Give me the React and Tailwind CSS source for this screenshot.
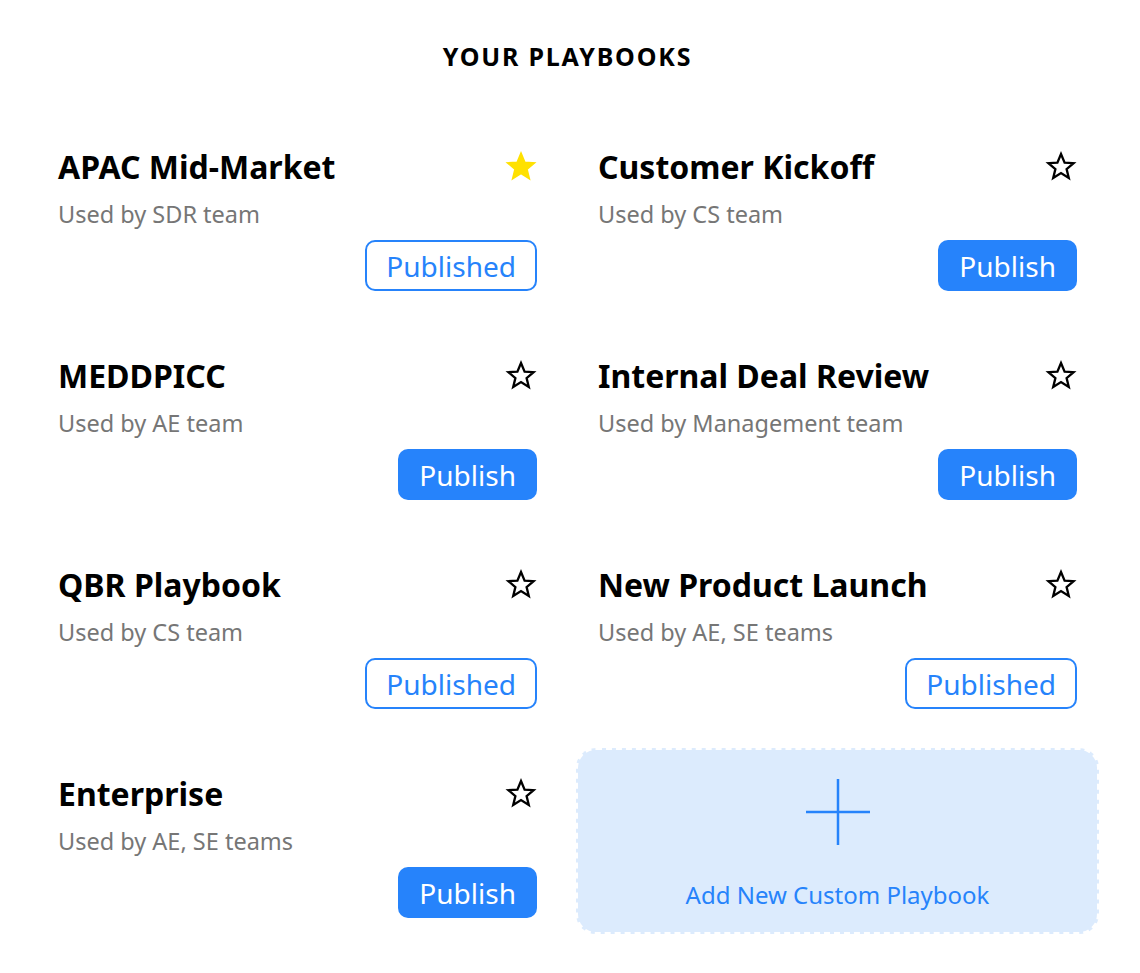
const playbooks = [
  { name: "APAC Mid-Market", team: "Used by SDR team", published: true, starred: true },
  { name: "Customer Kickoff", team: "Used by CS team", published: false },
  { name: "MEDDPICC", team: "Used by AE team", published: false },
  { name: "Internal Deal Review", team: "Used by Management team", published: false },
  { name: "QBR Playbook", team: "Used by CS team", published: true },
  { name: "New Product Launch", team: "Used by AE, SE teams", published: true },
  { name: "Enterprise", team: "Used by AE, SE teams", published: false },
];

const Star = ({ filled }) => (
  <svg width="32" height="32" viewBox="0 0 32 32">
    <polygon
      points="16,3 19.6,11.6 28.6,12.2 21.6,18.1 23.8,27 16,22.1 8.2,27 10.4,18.1 3.4,12.2 12.4,11.6"
      fill={filled ? "#ffe100" : "none"}
      stroke={filled ? "#ffe100" : "#000"}
      strokeWidth="2.3"
      strokeLinejoin="miter"
    />
  </svg>
);

const Card = ({ item }) => (
  <div className="flex h-[186px] flex-col rounded-[20px] px-[22px] pt-[22px]">
    <div className="flex items-center justify-between">
      <div className="text-[32px] leading-[48px] font-bold text-black">{item.name}</div>
      <Star filled={item.starred} />
    </div>
    <div className="mt-[7px] text-[23.5px] leading-[32px] text-[#767676]">{item.team}</div>
    <div className="mt-[10px] flex justify-end">
      {item.published ? (
        <button className="h-[51px] rounded-[10px] border-2 border-[#2683fb] bg-white px-[19px] text-[28px] text-[#2683fb]">
          Published
        </button>
      ) : (
        <button className="h-[51px] rounded-[10px] bg-[#2683fb] px-[21px] text-[28px] text-white">
          Publish
        </button>
      )}
    </div>
  </div>
);

export default function App() {
  return (
    <div
      className="min-h-[973px] bg-white pl-[36px] pr-[41px] pt-[36px]"
      style={{ fontFamily: '"Noto Sans", "Open Sans", sans-serif' }}
    >
      <h1 className="text-center text-[25px] leading-[40px] font-bold tracking-[1.8px] text-black">
        YOUR PLAYBOOKS
      </h1>
      <div className="mt-[45px] grid grid-cols-2 gap-x-[17px] gap-y-[23px]">
        {playbooks.map((p) => (
          <Card key={p.name} item={p} />
        ))}
        <div className="flex h-[186px] flex-col items-center justify-center rounded-[20px] border-2 border-dashed border-white bg-[#dcebfd]">
          <svg width="66" height="68" viewBox="0 0 66 68" className="mt-[6px]">
            <path d="M33 1V67M1 34H65" stroke="#2683fb" strokeWidth="2.5" />
          </svg>
          <div className="mt-[34px] text-[24px] leading-[30px] text-[#2683fb]">Add New Custom Playbook</div>
        </div>
      </div>
    </div>
  );
}
